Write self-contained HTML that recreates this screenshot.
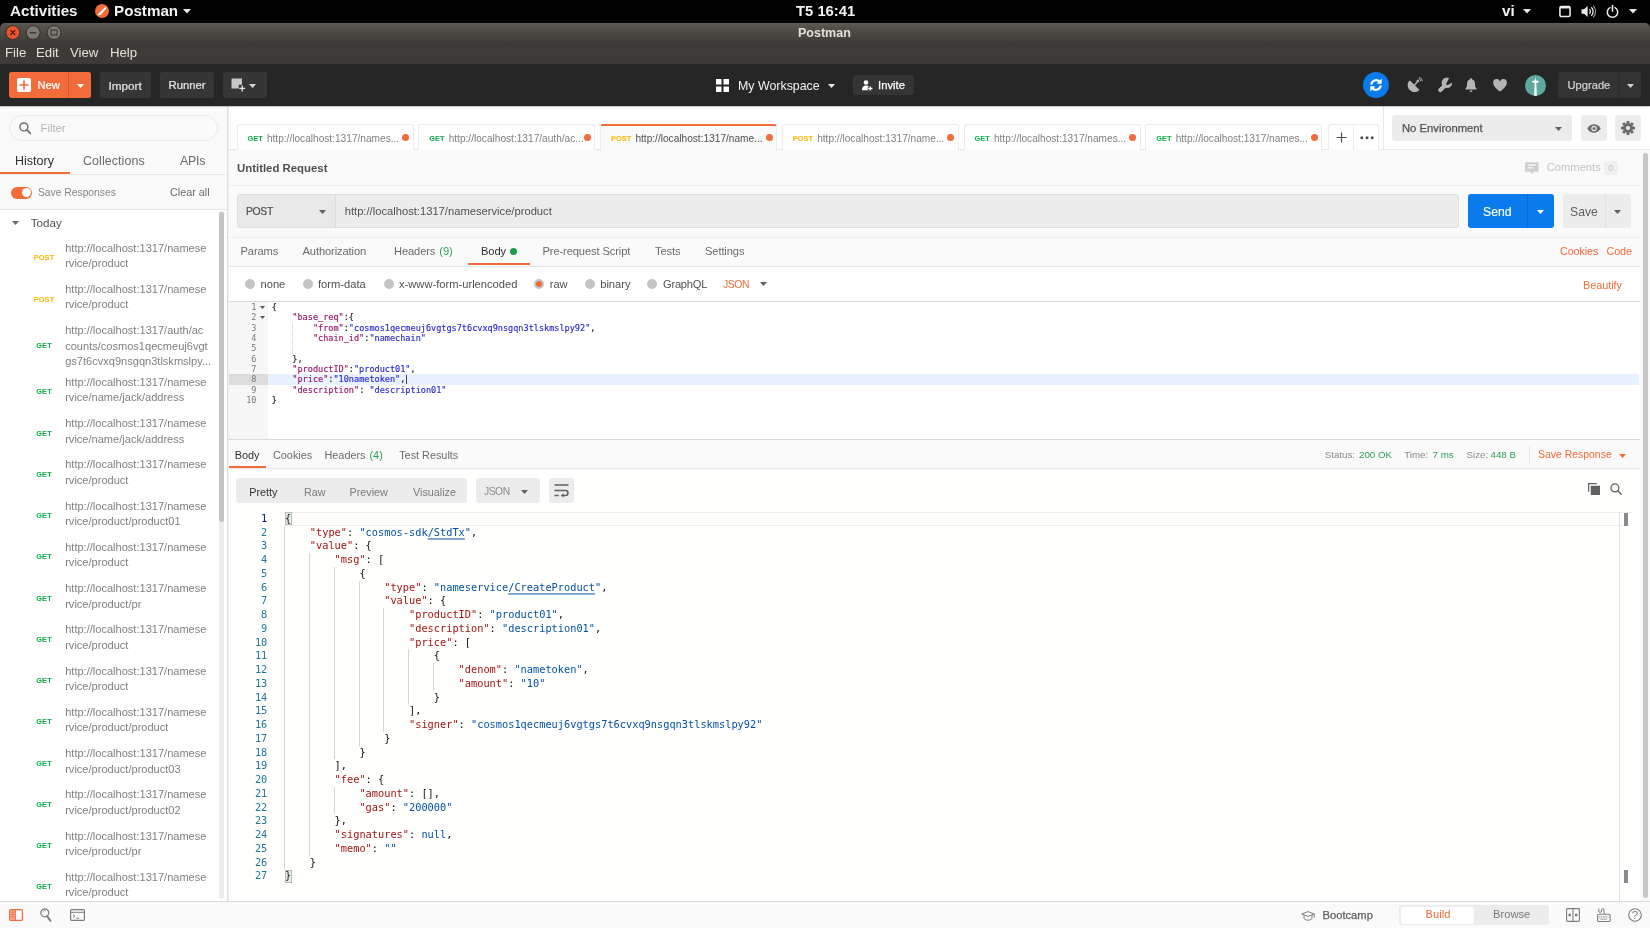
<!DOCTYPE html>
<html lang="en">
<head>
<meta charset="utf-8">
<title>Postman</title>
<style>
*{box-sizing:border-box;margin:0;padding:0}
html,body{width:1650px;height:928px;overflow:hidden;background:#fff}
body{position:relative;font-family:"Liberation Sans",sans-serif;font-size:11.17px;color:#505050;-webkit-font-smoothing:antialiased}
.a{position:absolute;white-space:nowrap}
.t{position:absolute;white-space:nowrap;line-height:1;transform:translateY(-50%)}
svg{position:absolute;overflow:visible}
/* ---------- GNOME top bar ---------- */
#topbar{left:0;top:0;width:1650px;height:23px;background:#000;color:#f2f2f2;font-weight:700;font-size:15.2px}
/* ---------- window title + menu ---------- */
#win{left:0;top:23px;width:1650px;height:41px;border-radius:5px 5px 0 0;background:linear-gradient(#625f55 0,#57554c 2px,#4a4942 10px,#403f3a 18px,#3c3b37 21px,#3c3b37 100%)}
#win .menu{font-size:13.2px;color:#e4e0d7}
#win .title{font-size:12.5px;font-weight:700;color:#e4e0d7}
/* ---------- Postman header ---------- */
#hdr{left:0;top:64px;width:1650px;height:42px;background:#262626;color:#fff;z-index:5;box-shadow:0 .5px 1.500px rgba(0,0,0,.55)}
.hb{position:absolute;top:8px;height:26px;border-radius:2.5px;background:#363636}
/* ---------- sidebar ---------- */
#side{left:0;top:106px;width:229px;height:795px;background:#fafafa}
.hi{margin-top:.5px;position:absolute;left:65.200px;width:150px;line-height:15.400px;font-size:11.050px;color:#808080;white-space:nowrap}
.hi b{position:absolute;left:-41.200px;width:40px;text-align:center;top:17.500px;line-height:1;font-size:7.400px;transform:translateY(-50%);letter-spacing:.1px}
.hi b.p{color:#ffb400}.hi b.g{color:#0cab4b}
/* ---------- main ---------- */
#main{left:229px;top:106px;width:1421px;height:795px;background:#fafafa}
.tab{position:absolute;top:18px;width:177px;height:26px;border:1px solid #ececec;border-bottom:0;border-radius:3px 3px 0 0;background:#fff;font-size:10.150px;color:#808080}
.tab.act{background:#fafafa;border-top:2px solid #f26b3a;color:#505050;height:27px}
.tab b,.tab span{position:absolute;top:14px;line-height:1;transform:translateY(-50%);white-space:nowrap}
.tab.act b,.tab.act span{top:13px}
.tab b{left:9.800px;font-size:7.400px;letter-spacing:.1px}
.tab b.p{color:#ffb400}.tab b.g{color:#0cab4b}
.tab i{position:absolute;left:164.500px;top:9.200px;width:7px;height:7px;border-radius:50%;background:#f26b3a}
.tab.act i{top:8.200px}
.rt{top:145.500px;font-size:11.170px;color:#6b6b6b;letter-spacing:-.12px}
.bt{top:178.500px;font-size:11.170px;color:#505050}
.rd{position:absolute;top:172.700px;width:10px;height:10px;border-radius:50%;background:#c4c4c4}
.rd.on{background:radial-gradient(circle,#f26b3a 0,#f26b3a 2.600px,#c4c4c4 3.400px)}
.al{position:absolute;left:0;width:1400px;height:10.310px;line-height:10.310px;font-family:"DejaVu Sans Mono","Liberation Mono",monospace;font-size:8.540px;color:#222;white-space:pre;-webkit-text-stroke:.15px}
.al .n{position:absolute;left:0;width:27.500px;text-align:right;color:#7a7a7a;-webkit-text-stroke:0}
.al .c{position:absolute;left:42.800px}
.al .k{color:#96186c}.al .s{color:#2a2ad4}
.ml{transform:translateY(.45px);position:absolute;left:0;width:1390px;height:13.750px;line-height:13.750px;font-family:"DejaVu Sans Mono","Liberation Mono",monospace;font-size:10.310px;color:#111;white-space:pre}
.ml .n{position:absolute;left:0;width:38.300px;text-align:right;color:#237893}
.ml .n.on{color:#0b216f}
.ml .c{position:absolute;left:56px}
.ml .k{color:#a31515}.ml .s{color:#0451a5}
.ml u{text-decoration:underline;text-underline-offset:1.500px}
.rs{top:349px;font-size:10.850px;color:#6b6b6b}
.st{top:348.800px;font-size:9.750px;color:#8a8a8a}
.st.v{color:#2e9f54}
.vw{top:386px;font-size:10.800px;color:#7a7a7a}
/* ---------- status bar ---------- */
#sbar{left:0;top:901px;width:1650px;height:27px;background:#fafafa;border-top:1px solid #dbdbdb}
</style>
</head>
<body>
<div id="root" style="position:absolute;left:0;top:0;width:1650px;height:928px;will-change:transform;opacity:.999">

<!-- ================= GNOME TOP BAR ================= -->
<div id="topbar" class="a">
  <span class="t" style="left:10px;top:11px">Activities</span>
  <svg style="left:95px;top:4px" width="14" height="14" viewBox="0 0 14 14"><circle cx="7" cy="7" r="7" fill="#f26b3a"/><path d="M3.2 10.8 L10.6 3.4 M3.2 10.8 L5.4 10.2 L10.9 4.2" stroke="#fff" stroke-width="1.1" fill="none" stroke-linecap="round"/></svg>
  <span class="t" style="left:114px;top:11px">Postman</span>
  <svg style="left:183px;top:9px" width="8" height="5" viewBox="0 0 8 5"><path d="M0 0h8L4 4.6z" fill="#e8e8e8"/></svg>
  <span class="t" style="left:796px;top:11px;font-size:14.8px">T5 16:41</span>
  <span class="t" style="left:1502px;top:11px">vi</span>
  <svg style="left:1523px;top:9px" width="8" height="5" viewBox="0 0 8 5"><path d="M0 0h8L4 4.6z" fill="#e8e8e8"/></svg>
  <svg style="left:1559px;top:5px" width="12" height="12.500" viewBox="0 0 13 13" preserveAspectRatio="none"><rect x="1" y="1.6" width="11" height="10.4" rx="1.6" fill="none" stroke="#ececec" stroke-width="1.7"/><rect x="1" y="1" width="11" height="2.6" rx="1" fill="#ececec"/></svg>
  <svg style="left:1581px;top:5px" width="15" height="13" viewBox="0 0 15 13"><path d="M0.5 4.3h2.6L6.6 1v11L3.1 8.7H0.5z" fill="#ececec"/><path d="M8.4 4.2a3.2 3.2 0 0 1 0 4.6" stroke="#ececec" stroke-width="1.3" fill="none"/><path d="M10.3 2.2a6 6 0 0 1 0 8.6" stroke="#ececec" stroke-width="1.3" fill="none"/><path d="M12.2 0.6a8.6 8.6 0 0 1 0 11.8" stroke="#9a9a9a" stroke-width="1.1" fill="none"/></svg>
  <svg style="left:1606px;top:5px" width="13" height="13" viewBox="0 0 13 13"><path d="M4 2.6a5.2 5.2 0 1 0 5 0" stroke="#ececec" stroke-width="1.5" fill="none" stroke-linecap="round"/><path d="M6.5 0.6v5.6" stroke="#ececec" stroke-width="1.6" stroke-linecap="round"/></svg>
  <svg style="left:1629px;top:9px" width="8" height="5" viewBox="0 0 8 5"><path d="M0 0h8L4 4.6z" fill="#e8e8e8"/></svg>
</div>

<!-- ================= WINDOW TITLE + MENU ================= -->
<div class="a" style="left:0;top:23px;width:1650px;height:8px;background:#000"></div>
<div id="win" class="a">
  <svg style="left:4px;top:1px" width="60" height="18" viewBox="0 0 60 18">
    <circle cx="8.800" cy="8.500" r="6.900" fill="#e9562d" stroke="#2f2e2a" stroke-width="1"/>
    <path d="M6.400 6.100l4.800 4.800M11.200 6.100l-4.800 4.800" stroke="#4a1608" stroke-width="1.300"/>
    <circle cx="29.200" cy="8.500" r="6.900" fill="#7b7971" stroke="#2f2e2a" stroke-width="1"/>
    <path d="M25.8 8.7h6.4" stroke="#3c3b37" stroke-width="1.4"/>
    <circle cx="50" cy="8.500" r="6.900" fill="#7b7971" stroke="#2f2e2a" stroke-width="1"/>
    <rect x="47" y="6" width="6" height="5" fill="none" stroke="#3c3b37" stroke-width="1.2"/>
  </svg>
  <span class="t title" style="left:798px;top:9.5px">Postman</span>
  <span class="t menu" style="left:5px;top:30px">File</span>
  <span class="t menu" style="left:36px;top:30px">Edit</span>
  <span class="t menu" style="left:70px;top:30px">View</span>
  <span class="t menu" style="left:110px;top:30px">Help</span>
</div>

<!-- ================= POSTMAN HEADER ================= -->
<div id="hdr" class="a">
  <!-- New -->
  <div class="hb" style="left:9px;width:82px;background:#f26b3a"></div>
  <div class="a" style="left:68px;top:8px;width:1px;height:26px;background:#d9572a"></div>
  <svg style="left:17px;top:14px" width="14" height="14" viewBox="0 0 14 14"><rect width="14" height="14" rx="2" fill="#fff"/><path d="M7 2.6v8.8M2.6 7h8.8" stroke="#f26b3a" stroke-width="1.7"/></svg>
  <span class="t" style="left:37.5px;top:21.5px;color:#fff;-webkit-text-stroke:.2px #fff">New</span>
  <svg style="left:76.5px;top:19.5px" width="7" height="4" viewBox="0 0 7 4"><path d="M0 0h7L3.5 4z" fill="#fff"/></svg>
  <!-- Import / Runner -->
  <div class="hb" style="left:100px;width:51px"></div>
  <span class="t" style="left:108.5px;top:21.5px;color:#e6e6e6;font-size:11.700px;-webkit-text-stroke:.2px #e6e6e6">Import</span>
  <div class="hb" style="left:160px;width:54px"></div>
  <span class="t" style="left:168.5px;top:21.5px;color:#e6e6e6;font-size:11.300px;-webkit-text-stroke:.2px #e6e6e6">Runner</span>
  <div class="hb" style="left:223px;width:44px"></div>
  <svg style="left:231px;top:14px" width="15" height="14" viewBox="0 0 15 14"><path d="M0.5 0.5h10.5v6.3h-3.3v3.7h-7.2z" fill="#c9c9c9"/><path d="M11.2 7.4v6M8.2 10.4h6" stroke="#e6e6e6" stroke-width="1.4"/></svg>
  <svg style="left:249px;top:19.5px" width="7" height="4" viewBox="0 0 7 4"><path d="M0 0h7L3.5 4z" fill="#d8d8d8"/></svg>
  <!-- workspace -->
  <svg style="left:716px;top:15px" width="13" height="13" viewBox="0 0 13 13"><path d="M0 0h5.5v5.5H0zM7.5 0H13v5.5H7.5zM0 7.5h5.5V13H0zM7.5 7.5H13V13H7.5z" fill="#fff"/></svg>
  <span class="t" style="left:738px;top:21.5px;color:#f0f0f0;font-size:12.4px">My Workspace</span>
  <svg style="left:827.5px;top:19.5px" width="7" height="4" viewBox="0 0 7 4"><path d="M0 0h7L3.5 4z" fill="#e8e8e8"/></svg>
  <div class="hb" style="left:853px;width:61px;top:11px;height:20px;background:#353535"></div>
  <svg style="left:862px;top:15.500px" width="11" height="11" viewBox="0 0 11 11"><circle cx="4" cy="2.500" r="2.300" fill="#fff"/><path d="M0 10.300c0-3.200 1.700-4.700 4-4.700 1.300 0 2.300.5 3 1.300v3.400z" fill="#fff"/><path d="M8.300 5.800v5.200M5.700 8.400h5.200" stroke="#353535" stroke-width="3"/><path d="M8.300 6.400v4.200M6.200 8.500h4.200" stroke="#fff" stroke-width="1.300"/></svg>
  <span class="t" style="left:878px;top:21.500px;color:#fff;font-size:11.300px;-webkit-text-stroke:.25px #fff">Invite</span>
  <!-- right icons -->
  <svg style="left:1362.700px;top:8px" width="26" height="26" viewBox="0 0 26 26"><circle cx="13" cy="13" r="13" fill="#097bed"/><path d="M8.300 12.600a4.800 4.800 0 0 1 8.300-2.900" stroke="#fff" stroke-width="2.100" fill="none"/><path d="M18.700 6.600v5.100h-5.100z" fill="#fff"/><path d="M17.700 13.400a4.800 4.800 0 0 1-8.300 2.900" stroke="#fff" stroke-width="2.100" fill="none"/><path d="M7.300 19.400v-5.100h5.100z" fill="#fff"/></svg>
  <svg style="left:1407px;top:13.200px" width="16" height="15" viewBox="0 0 16 15"><path d="M2.700 3.200a7 7 0 0 0 9.900 9.900z" fill="#b4b4b4"/><path d="M7.400 8.400l3.300-4.200" stroke="#b4b4b4" stroke-width="1.400"/><circle cx="10.900" cy="4" r="1.300" fill="#b4b4b4"/><path d="M11.500 1.700a3 3 0 0 1 2.300 2.600M12 .2a4.800 4.800 0 0 1 3.400 3.900" stroke="#b4b4b4" stroke-width=".9" fill="none"/><path d="M5.500 12.700l-.8 1.900h5l-.7-1.300z" fill="#b4b4b4"/></svg>
  <svg style="left:1437.500px;top:13px" width="15" height="15" viewBox="0 0 15 15"><path d="M5.800 7.200L1 12a1.700 1.700 0 0 0 2.400 2.400l4.800-4.800z" fill="#b4b4b4" stroke="#b4b4b4" stroke-width="1"/><circle cx="8.900" cy="5.800" r="5.300" fill="#b4b4b4"/><path d="M8.300 6.400l4.400-8.400 5.500 5.500-8.400 4.400a1.300 1.300 0 0 1-1.500-1.500z" fill="#262626"/></svg>
  <svg style="left:1464.800px;top:13.500px" width="12" height="15" viewBox="0 0 12 15"><path d="M6 .300c.6 0 1 .4 1 1 1.900.6 2.900 2.200 2.900 4.400 0 2.700.6 3.900 1.600 4.800v.900H.500v-.900c1-.9 1.600-2.100 1.600-4.800 0-2.200 1-3.800 2.900-4.400 0-.6.400-1 1-1zM4.500 12.500h3a1.500 1.500 0 0 1-3 0z" fill="#b4b4b4"/></svg>
  <svg style="left:1493px;top:15px" width="14" height="13" viewBox="0 0 14 13"><path d="M7 12.600C2.600 9 .2 6.600.2 3.900A3.500 3.500 0 0 1 7 2.400a3.500 3.500 0 0 1 6.800 1.500C13.800 6.600 11.400 9 7 12.600z" fill="#b4b4b4"/></svg>
  <svg style="left:1525px;top:10.500px" width="21" height="21" viewBox="0 0 21 21"><circle cx="10.500" cy="10.500" r="10.500" fill="#5fa8a0"/><path d="M10.500 1.200l.5 4.300c1.500.1 2.700.5 3.300 1-.7.800-1.800 1.300-3 1.500l.6 12.800h-2.800l.6-12.800c-1.200-.2-2.300-.7-3-1.500.6-.5 1.800-.9 3.300-1z" fill="#fff"/></svg>
  <div class="hb" style="left:1558px;width:83px;background:#333"></div>
  <div class="a" style="left:1618px;top:8px;width:1px;height:26px;background:#2a2a2a"></div>
  <span class="t" style="left:1567.500px;top:21.500px;color:#d6d6d6;-webkit-text-stroke:.2px #d6d6d6">Upgrade</span>
  <svg style="left:1627px;top:19.500px" width="7" height="4" viewBox="0 0 7 4"><path d="M0 0h7L3.500 4z" fill="#d0d0d0"/></svg>
</div>

<!-- ================= SIDEBAR ================= -->
<div id="side" class="a">
  <div class="a" style="left:9px;top:9px;width:209px;height:26px;border:1px solid #e9e9e9;border-radius:13px;background:#fafafa"></div>
  <svg style="left:19px;top:16px" width="12.300" height="12.300" viewBox="0 0 13 13"><circle cx="5.200" cy="5.200" r="4.200" fill="none" stroke="#6b6b6b" stroke-width="1.500"/><path d="M8.300 8.300l3.700 3.700" stroke="#6b6b6b" stroke-width="1.700" stroke-linecap="round"/></svg>
  <span class="t" style="left:40.500px;top:22.500px;color:#b4b4b4;font-size:11.300px">Filter</span>
  <span class="t" style="left:15px;top:54.500px;color:#303030;font-size:12.500px">History</span>
  <span class="t" style="left:83px;top:54.500px;font-size:12.500px;color:#6a6a6a;letter-spacing:.05px">Collections</span>
  <span class="t" style="left:180px;top:54.500px;font-size:12.500px;color:#6a6a6a;letter-spacing:-.3px">APIs</span>
  <div class="a" style="left:0;top:65.500px;width:69.500px;height:2.700px;background:#f26b3a"></div>
  <div class="a" style="left:0;top:68.200px;width:227px;height:1px;background:#ebebeb"></div>
  <div class="a" style="left:10.500px;top:80.500px;width:21.500px;height:12px;border-radius:6px;background:#f26b3a"></div>
  <div class="a" style="left:21.500px;top:82px;width:9px;height:9px;border-radius:50%;background:#fff"></div>
  <span class="t" style="left:38px;top:86.800px;color:#858585;font-size:10.300px">Save Responses</span>
  <span class="t" style="left:170px;top:86.300px;color:#6a6a6a;font-size:10.800px">Clear all</span>
  <div class="a" style="left:0;top:103px;width:227px;height:1px;background:#e6e6e6"></div>
  <div class="a" style="left:0;top:104px;width:227px;height:691px;background:#fff;overflow:hidden">
  </div>
  <svg style="left:12px;top:115.300px" width="7" height="4" viewBox="0 0 7 4"><path d="M0 0h7L3.500 4z" fill="#6b6b6b"/></svg>
  <span class="t" style="left:30.800px;top:117px;color:#505050;font-size:11.600px">Today</span>
  <div class="hi" style="top:134.30px"><b class="p">POST</b>http://localhost:1317/namese<br>rvice/product</div>
  <div class="hi" style="top:175.55px"><b class="p">POST</b>http://localhost:1317/namese<br>rvice/product</div>
  <div class="hi" style="top:216.80px"><b class="g" style="top:23.2px">GET</b>http://localhost:1317/auth/ac<br>counts/cosmos1qecmeuj6vgt<br>gs7t6cvxq9nsgqn3tlskmslpy...</div>
  <div class="hi" style="top:268.36px"><b class="g">GET</b>http://localhost:1317/namese<br>rvice/name/jack/address</div>
  <div class="hi" style="top:309.61px"><b class="g">GET</b>http://localhost:1317/namese<br>rvice/name/jack/address</div>
  <div class="hi" style="top:350.86px"><b class="g">GET</b>http://localhost:1317/namese<br>rvice/product</div>
  <div class="hi" style="top:392.11px"><b class="g">GET</b>http://localhost:1317/namese<br>rvice/product/product01</div>
  <div class="hi" style="top:433.36px"><b class="g">GET</b>http://localhost:1317/namese<br>rvice/product</div>
  <div class="hi" style="top:474.61px"><b class="g">GET</b>http://localhost:1317/namese<br>rvice/product/pr</div>
  <div class="hi" style="top:515.86px"><b class="g">GET</b>http://localhost:1317/namese<br>rvice/product</div>
  <div class="hi" style="top:557.11px"><b class="g">GET</b>http://localhost:1317/namese<br>rvice/product</div>
  <div class="hi" style="top:598.36px"><b class="g">GET</b>http://localhost:1317/namese<br>rvice/product/product</div>
  <div class="hi" style="top:639.61px"><b class="g">GET</b>http://localhost:1317/namese<br>rvice/product/product03</div>
  <div class="hi" style="top:680.86px"><b class="g">GET</b>http://localhost:1317/namese<br>rvice/product/product02</div>
  <div class="hi" style="top:722.11px"><b class="g">GET</b>http://localhost:1317/namese<br>rvice/product/pr</div>
  <div class="hi" style="top:763.36px"><b class="g">GET</b>http://localhost:1317/namese<br>rvice/product</div>
  <div class="a" style="left:219.300px;top:105px;width:4.600px;height:688px;border-radius:2px;background:#ececec"></div>
  <div class="a" style="left:219.300px;top:106px;width:4.600px;height:310px;border-radius:2.200px;background:#c4c4c4"></div>
</div>

<div class="a" style="left:226.800px;top:106px;width:2.700px;height:795px;z-index:3;background:linear-gradient(to right,#d9d9d9,#e6e6e6 45%,#f6f6f6)"></div>
<!-- ================= MAIN ================= -->
<div id="main" class="a">
  <!-- tab strip -->
  <div class="a" style="left:0;top:0;width:1421px;height:44px;background:#fff"></div>
  <div class="a" style="left:0;top:43.200px;width:1421px;height:1px;background:#e8e8e8"></div>
  <div class="tab" style="left:7.60px"><b class="g">GET</b><span style="left:29.3px">http://localhost:1317/names...</span><i></i></div>
  <div class="tab" style="left:189.35px"><b class="g">GET</b><span style="left:29.3px">http://localhost:1317/auth/ac...</span><i></i></div>
  <div class="tab act" style="left:371.10px"><b class="p">POST</b><span style="left:34.3px">http://localhost:1317/name...</span><i></i></div>
  <div class="tab" style="left:552.85px"><b class="p">POST</b><span style="left:34.3px">http://localhost:1317/name...</span><i></i></div>
  <div class="tab" style="left:734.60px"><b class="g">GET</b><span style="left:29.3px">http://localhost:1317/names...</span><i></i></div>
  <div class="tab" style="left:916.35px"><b class="g">GET</b><span style="left:29.3px">http://localhost:1317/names...</span><i></i></div>
  <div class="a" style="left:1098.500px;top:18px;width:51.300px;height:26px;border:1px solid #ececec;border-bottom:0;border-radius:3px 3px 0 0;background:#fff"></div>
  <div class="a" style="left:1124px;top:18px;width:1px;height:26px;background:#ececec"></div>
  <svg style="left:1106.500px;top:26px" width="11" height="11" viewBox="0 0 11 11"><path d="M5.500 0.500v10M0.500 5.500h10" stroke="#505050" stroke-width="1.200"/></svg>
  <svg style="left:1130.500px;top:30px" width="14" height="4" viewBox="0 0 14 4"><circle cx="1.800" cy="1.800" r="1.500" fill="#505050"/><circle cx="7" cy="1.800" r="1.500" fill="#505050"/><circle cx="12.200" cy="1.800" r="1.500" fill="#505050"/></svg>
  <div class="a" style="left:1153.500px;top:0;width:1px;height:44px;background:#e8e8e8"></div>
  <!-- environment -->
  <div class="a" style="left:1162.500px;top:9px;width:180.500px;height:26px;border-radius:3px;background:#ececec"></div>
  <span class="t" style="left:1173px;top:23.300px;color:#505050;font-size:11.250px;-webkit-text-stroke:.25px #505050">No Environment</span>
  <svg style="left:1325.500px;top:20.500px" width="7" height="4" viewBox="0 0 7 4"><path d="M0 0h7L3.500 4z" fill="#606060"/></svg>
  <div class="a" style="left:1351.700px;top:9px;width:26px;height:26px;border-radius:3px;background:#ececec"></div>
  <svg style="left:1357.500px;top:17.500px" width="14" height="9" viewBox="0 0 14 9"><path d="M0.300 4.500C2 1.500 4.400.300 7 .300s5 1.200 6.700 4.200C12 7.500 9.600 8.700 7 8.700S2 7.500.300 4.500z" fill="#6b6b6b"/><circle cx="7" cy="4.500" r="2.700" fill="#ececec"/><circle cx="7" cy="4.500" r="1.500" fill="#6b6b6b"/></svg>
  <div class="a" style="left:1386.200px;top:9px;width:26px;height:26px;border-radius:3px;background:#ececec"></div>
  <svg style="left:1392.200px;top:15px" width="14" height="14" viewBox="-7 -7 14 14"><g fill="#6b6b6b"><circle r="4.700"/><rect x="-1.500" y="-7" width="3" height="14" rx=".6"/><rect x="-1.500" y="-7" width="3" height="14" rx=".6" transform="rotate(45)"/><rect x="-1.500" y="-7" width="3" height="14" rx=".6" transform="rotate(90)"/><rect x="-1.500" y="-7" width="3" height="14" rx=".6" transform="rotate(135)"/></g><circle r="2.100" fill="#ececec"/></svg>
  <!-- title row -->
  <span class="t" style="left:8px;top:62.700px;color:#505050;font-weight:700;font-size:11.400px">Untitled Request</span>
  <svg style="left:1296px;top:55.500px" width="13.500" height="13" viewBox="0 0 15 14"><path d="M0 0h15v10.500H9.500L7.500 13 5.500 10.500H0z" fill="#cfcfcf"/><path d="M3 3.300h9M3 6.300h6" stroke="#fafafa" stroke-width="1.300"/></svg>
  <span class="t" style="left:1317.700px;top:61.500px;color:#c3c3c3;font-size:11.200px">Comments</span>
  <div class="a" style="left:1375px;top:55px;width:13.500px;height:13.500px;border-radius:2px;background:#f0f0f0"></div>
  <span class="t" style="left:1379.300px;top:62px;color:#c3c3c3;font-size:9px">0</span>
  <div class="a" style="left:0;top:79px;width:1411px;height:1px;background:#ececec"></div>
  <!-- url row -->
  <div class="a" style="left:7.500px;top:88px;width:1222.500px;height:34.200px;border:1px solid #dedede;border-radius:3px;background:#ececec"></div>
  <div class="a" style="left:106px;top:89px;width:1px;height:32.200px;background:#dadada"></div>
  <div class="a" style="left:8.500px;top:89px;width:97.500px;height:32.200px;background:#e9e9e9;border-radius:2px 0 0 2px"></div>
  <span class="t" style="left:17px;top:106px;color:#505050;font-size:10.400px;letter-spacing:-.35px;-webkit-text-stroke:.2px #505050">POST</span>
  <svg style="left:89.500px;top:104px" width="7" height="4" viewBox="0 0 7 4"><path d="M0 0h7L3.500 4z" fill="#606060"/></svg>
  <span class="t" style="left:115.700px;top:105.700px;color:#505050;font-size:11.200px">http://localhost:1317/nameservice/product</span>
  <div class="a" style="left:1239px;top:88px;width:86px;height:34.200px;border-radius:3px;background:#097bed"></div>
  <div class="a" style="left:1298px;top:88px;width:1px;height:34.200px;background:#0a6bcb"></div>
  <span class="t" style="left:1254px;top:106px;color:#fff;font-size:12.200px;-webkit-text-stroke:.15px #fff">Send</span>
  <svg style="left:1307.500px;top:104px" width="7" height="4" viewBox="0 0 7 4"><path d="M0 0h7L3.500 4z" fill="#fff"/></svg>
  <div class="a" style="left:1333.500px;top:88px;width:68.500px;height:34.200px;border-radius:3px;background:#ececec"></div>
  <div class="a" style="left:1376px;top:88px;width:1px;height:34.200px;background:#e0e0e0"></div>
  <span class="t" style="left:1341px;top:106px;color:#606060;font-size:12.200px">Save</span>
  <svg style="left:1385px;top:104px" width="7" height="4" viewBox="0 0 7 4"><path d="M0 0h7L3.500 4z" fill="#606060"/></svg>
  <!-- request tabs -->
  <div class="a" style="left:0;top:130.500px;width:1411px;height:1px;background:#efefef"></div>
  <span class="t rt" style="left:11.500px">Params</span>
  <span class="t rt" style="left:73.500px">Authorization</span>
  <span class="t rt" style="left:165px">Headers <span style="color:#2e9f54;margin-left:1px">(9)</span></span>
  <span class="t rt" style="left:252px;color:#303030">Body</span>
  <div class="a" style="left:280.500px;top:142px;width:7px;height:7px;border-radius:50%;background:#1a9b47"></div>
  <div class="a" style="left:238.500px;top:157px;width:62.300px;height:2.400px;background:#f26b3a"></div>
  <span class="t rt" style="left:313.500px">Pre-request Script</span>
  <span class="t rt" style="left:426px">Tests</span>
  <span class="t rt" style="left:476px">Settings</span>
  <span class="t rt" style="left:1331px;top:144.700px;color:#f26b3a;font-size:10.800px">Cookies</span>
  <span class="t rt" style="left:1377.500px;top:144.700px;color:#f26b3a;font-size:10.800px">Code</span>
  <div class="a" style="left:0;top:159.700px;width:1411px;height:1px;background:#e6e6e6"></div>
  <!-- body type row -->
  <div class="a" style="left:0;top:160.700px;width:1411px;height:35px;background:#fff"></div>
  <i class="rd" style="left:16px"></i><span class="t bt" style="left:31.500px">none</span>
  <i class="rd" style="left:73.700px"></i><span class="t bt" style="left:89px">form-data</span>
  <i class="rd" style="left:154.500px"></i><span class="t bt" style="left:170px">x-www-form-urlencoded</span>
  <i class="rd on" style="left:305.200px"></i><span class="t bt" style="left:320.700px">raw</span>
  <i class="rd" style="left:355.700px"></i><span class="t bt" style="left:371.200px">binary</span>
  <i class="rd" style="left:418.200px"></i><span class="t bt" style="left:434px;letter-spacing:-.25px">GraphQL</span>
  <span class="t bt" style="left:494px;color:#f26b3a;font-size:10.400px;letter-spacing:-.4px">JSON</span>
  <svg style="left:530.500px;top:176px" width="7" height="4" viewBox="0 0 7 4"><path d="M0 0h7L3.500 4z" fill="#606060"/></svg>
  <span class="t bt" style="left:1354px;color:#f26b3a;font-size:10.800px">Beautify</span>
  <!-- request editor -->
  <div class="a" style="left:-1px;top:195.400px;width:1412.500px;height:138.600px;border:1px solid #dadada;background:#fff;overflow:hidden">
    <div class="a" style="left:0;top:0;width:38.500px;height:137px;background:#f7f7f7"></div>
    <div class="al" style="top:-0.35px"><span class="n">1</span><svg style="left:30.700px;top:3.600px" width="5" height="3" viewBox="0 0 5 3"><path d="M0 0h5L2.500 3z" fill="#555"/></svg><span class="c">{</span></div>
    <div class="al" style="top:9.96px"><span class="n">2</span><svg style="left:30.700px;top:3.600px" width="5" height="3" viewBox="0 0 5 3"><path d="M0 0h5L2.500 3z" fill="#555"/></svg><span class="c">    <span class="k">"base_req"</span>:{</span></div>
    <div class="al" style="top:20.27px"><span class="n">3</span><span class="c">        <span class="k">"from"</span>:<span class="s">"cosmos1qecmeuj6vgtgs7t6cvxq9nsgqn3tlskmslpy92"</span>,</span></div>
    <div class="al" style="top:30.58px"><span class="n">4</span><span class="c">        <span class="k">"chain_id"</span>:<span class="s">"namechain"</span></span></div>
    <div class="al" style="top:40.89px"><span class="n">5</span><span class="c"></span></div>
    <div class="al" style="top:51.20px"><span class="n">6</span><span class="c">    },</span></div>
    <div class="al" style="top:61.51px"><span class="n">7</span><span class="c">    <span class="k">"productID"</span>:<span class="s">"product01"</span>,</span></div>
    <div class="a" style="left:0;top:71.82px;width:38.500px;height:10.31px;background:#dcdcdc"></div><div class="a" style="left:38.500px;top:71.82px;width:1371px;height:10.31px;background:#e8f2fe"></div>
    <div class="al" style="top:71.82px"><span class="n">8</span><span class="c">    <span class="k">"price"</span>:<span class="s">"10nametoken"</span>,</span></div>
    <div class="al" style="top:82.13px"><span class="n">9</span><span class="c">    <span class="k">"description"</span>: <span class="s">"description01"</span></span></div>
    <div class="al" style="top:92.44px"><span class="n">10</span><span class="c">}</span></div>
    <div class="a" style="left:177px;top:72.32px;width:1px;height:9.300px;background:#444"></div>
    <div class="a" style="left:62.500px;top:20.27px;width:0;height:30.93px;border-left:1px dotted #cfcfcf"></div>
  </div>
  <!-- response -->
  <div class="a" style="left:0;top:334px;width:1411px;height:29px;background:#fafafa"></div>
  <span class="t rs" style="left:5.700px;color:#303030">Body</span>
  <span class="t rs" style="left:44px">Cookies</span>
  <span class="t rs" style="left:95.500px">Headers <span style="color:#2e9f54;margin-left:1px">(4)</span></span>
  <span class="t rs" style="left:170.200px">Test Results</span>
  <div class="a" style="left:-1px;top:359.700px;width:37.500px;height:2.500px;background:#f26b3a"></div>
  <span class="t st" style="left:1095.700px">Status:</span><span class="t st v" style="left:1130px">200 OK</span>
  <span class="t st" style="left:1175.200px">Time:</span><span class="t st v" style="left:1203.500px">7 ms</span>
  <span class="t st" style="left:1237.500px">Size:</span><span class="t st v" style="left:1261.500px">448 B</span>
  <div class="a" style="left:1299.500px;top:340px;width:1px;height:16.500px;background:#e6e6e6"></div>
  <span class="t" style="left:1309px;top:349px;color:#f26b3a;font-size:10.450px">Save Response</span>
  <svg style="left:1390px;top:347.800px" width="7" height="4" viewBox="0 0 7 4"><path d="M0 0h7L3.500 4z" fill="#f26b3a"/></svg>
  <div class="a" style="left:0;top:362.200px;width:1411px;height:1px;background:#e8e8e8"></div>
  <div class="a" style="left:0;top:363.500px;width:1411px;height:431.500px;background:#fffffe"></div>
  <!-- view bar -->
  <div class="a" style="left:7.200px;top:372.200px;width:231.300px;height:25px;border-radius:3px;background:#ececec"></div>
  <span class="t vw" style="left:20.200px;color:#303030">Pretty</span>
  <span class="t vw" style="left:75px">Raw</span>
  <span class="t vw" style="left:120.500px">Preview</span>
  <span class="t vw" style="left:184px">Visualize</span>
  <div class="a" style="left:247.200px;top:372.200px;width:63.800px;height:25px;border-radius:3px;background:#ececec"></div>
  <span class="t vw" style="left:255px;color:#8a8a8a;font-size:10.300px;letter-spacing:-.45px">JSON</span>
  <svg style="left:291.700px;top:383.500px" width="7" height="4" viewBox="0 0 7 4"><path d="M0 0h7L3.500 4z" fill="#606060"/></svg>
  <div class="a" style="left:319.700px;top:372.200px;width:25.500px;height:25px;border-radius:3px;background:#ececec"></div>
  <svg style="left:325px;top:377.600px" width="15" height="14" viewBox="0 0 15 14"><path d="M.5 1h14M.5 6.500h11a2.450 2.450 0 0 1 0 4.900h-3.300M.5 11.400h4.200" stroke="#606060" stroke-width="1.500" fill="none"/><path d="M9.600 9.200v4.400l-2.900-2.200z" fill="#606060"/></svg>
  <svg style="left:1358.500px;top:377px" width="12" height="12" viewBox="0 0 13 13"><path d="M.7 9.500V.700h8.800" stroke="#606060" stroke-width="1.300" fill="none"/><rect x="3" y="3" width="10" height="10" fill="#606060"/></svg>
  <svg style="left:1381px;top:377px" width="12" height="12" viewBox="0 0 13 13"><circle cx="5.300" cy="5.300" r="4.300" fill="none" stroke="#606060" stroke-width="1.400"/><path d="M8.500 8.500l3.700 3.700" stroke="#606060" stroke-width="1.600" stroke-linecap="round"/></svg>
  <!-- monaco -->
  <div class="a" style="left:56px;top:405.57px;width:1346px;height:14.15px;border-top:1.700px solid #eee;border-bottom:1.700px solid #eee"></div>
  <div class="a" style="left:55.20px;top:419.62px;width:1px;height:343.75px;background:#d6d6d6"></div>
  <div class="a" style="left:80.02px;top:447.12px;width:1px;height:302.50px;background:#d6d6d6"></div>
  <div class="a" style="left:104.84px;top:460.88px;width:1px;height:192.50px;background:#d6d6d6"></div>
  <div class="a" style="left:104.84px;top:680.88px;width:1px;height:27.50px;background:#d6d6d6"></div>
  <div class="a" style="left:129.66px;top:474.62px;width:1px;height:165.00px;background:#d6d6d6"></div>
  <div class="a" style="left:154.48px;top:502.12px;width:1px;height:123.75px;background:#d6d6d6"></div>
  <div class="a" style="left:179.30px;top:543.38px;width:1px;height:55.00px;background:#d6d6d6"></div>
  <div class="a" style="left:204.12px;top:557.12px;width:1px;height:27.50px;background:#d6d6d6"></div>
  <div class="ml" style="top:405.88px"><span class="n on">1</span><span class="c">{</span></div>
  <div class="ml" style="top:419.62px"><span class="n">2</span><span class="c">    <span class="k">"type"</span>: <span class="s">"cosmos-sdk<u>/StdTx</u>"</span>,</span></div>
  <div class="ml" style="top:433.38px"><span class="n">3</span><span class="c">    <span class="k">"value"</span>: {</span></div>
  <div class="ml" style="top:447.12px"><span class="n">4</span><span class="c">        <span class="k">"msg"</span>: [</span></div>
  <div class="ml" style="top:460.88px"><span class="n">5</span><span class="c">            {</span></div>
  <div class="ml" style="top:474.62px"><span class="n">6</span><span class="c">                <span class="k">"type"</span>: <span class="s">"nameservice<u>/CreateProduct</u>"</span>,</span></div>
  <div class="ml" style="top:488.38px"><span class="n">7</span><span class="c">                <span class="k">"value"</span>: {</span></div>
  <div class="ml" style="top:502.12px"><span class="n">8</span><span class="c">                    <span class="k">"productID"</span>: <span class="s">"product01"</span>,</span></div>
  <div class="ml" style="top:515.88px"><span class="n">9</span><span class="c">                    <span class="k">"description"</span>: <span class="s">"description01"</span>,</span></div>
  <div class="ml" style="top:529.62px"><span class="n">10</span><span class="c">                    <span class="k">"price"</span>: [</span></div>
  <div class="ml" style="top:543.38px"><span class="n">11</span><span class="c">                        {</span></div>
  <div class="ml" style="top:557.12px"><span class="n">12</span><span class="c">                            <span class="k">"denom"</span>: <span class="s">"nametoken"</span>,</span></div>
  <div class="ml" style="top:570.88px"><span class="n">13</span><span class="c">                            <span class="k">"amount"</span>: <span class="s">"10"</span></span></div>
  <div class="ml" style="top:584.62px"><span class="n">14</span><span class="c">                        }</span></div>
  <div class="ml" style="top:598.38px"><span class="n">15</span><span class="c">                    ],</span></div>
  <div class="ml" style="top:612.12px"><span class="n">16</span><span class="c">                    <span class="k">"signer"</span>: <span class="s">"cosmos1qecmeuj6vgtgs7t6cvxq9nsgqn3tlskmslpy92"</span></span></div>
  <div class="ml" style="top:625.88px"><span class="n">17</span><span class="c">                }</span></div>
  <div class="ml" style="top:639.62px"><span class="n">18</span><span class="c">            }</span></div>
  <div class="ml" style="top:653.38px"><span class="n">19</span><span class="c">        ],</span></div>
  <div class="ml" style="top:667.12px"><span class="n">20</span><span class="c">        <span class="k">"fee"</span>: {</span></div>
  <div class="ml" style="top:680.88px"><span class="n">21</span><span class="c">            <span class="k">"amount"</span>: [],</span></div>
  <div class="ml" style="top:694.62px"><span class="n">22</span><span class="c">            <span class="k">"gas"</span>: <span class="s">"200000"</span></span></div>
  <div class="ml" style="top:708.38px"><span class="n">23</span><span class="c">        },</span></div>
  <div class="ml" style="top:722.12px"><span class="n">24</span><span class="c">        <span class="k">"signatures"</span>: <span class="s">null</span>,</span></div>
  <div class="ml" style="top:735.88px"><span class="n">25</span><span class="c">        <span class="k">"memo"</span>: <span class="s">""</span></span></div>
  <div class="ml" style="top:749.62px"><span class="n">26</span><span class="c">    }</span></div>
  <div class="ml" style="top:763.38px"><span class="n">27</span><span class="c">}</span></div>
  <div class="a" style="left:55.5px;top:406.38px;width:7.21px;height:12.75px;border:1px solid #b9b9b9;background:rgba(0,100,0,.1)"></div>
  <div class="a" style="left:55.5px;top:763.88px;width:7.21px;height:12.75px;border:1px solid #b9b9b9;background:rgba(0,100,0,.1)"></div>
  <div class="a" style="left:1389.700px;top:406px;width:1px;height:389px;background:#e2e2e2"></div>
  <div class="a" style="left:1394.700px;top:406.500px;width:4.300px;height:13.300px;background:#8a8a8a"></div>
  <div class="a" style="left:1394.700px;top:763.500px;width:4.300px;height:13.700px;background:#8a8a8a"></div>
  <!-- page scrollbar -->
  <div class="a" style="left:1411px;top:44.500px;width:10px;height:750.500px;background:#fafafa"></div>
  <div class="a" style="left:1413.800px;top:47px;width:4.800px;height:745px;border-radius:2.500px;background:#c6c6c6"></div>
</div>

<!-- ================= STATUS BAR ================= -->
<div id="sbar" class="a">
  <svg style="left:8.500px;top:6.7px" width="14" height="12" viewBox="0 0 14 12"><rect x=".6" y=".6" width="12.800" height="10.800" rx="1" fill="none" stroke="#f26b3a" stroke-width="1.200"/><rect x="1" y="1" width="5" height="10" fill="#f7a486"/><path d="M6.300 .6v10.800" stroke="#f26b3a" stroke-width="1.100"/><path d="M2 3.200h3M2 5.500h3M2 7.800h3" stroke="#f26b3a" stroke-width=".9"/></svg>
  <svg style="left:40px;top:5.7px" width="12" height="14" viewBox="0 0 12 14"><circle cx="4.800" cy="4.800" r="4" fill="none" stroke="#7d7d7d" stroke-width="1.200"/><path d="M3 3.600a2.200 2.200 0 0 1 2.600-1" stroke="#7d7d7d" stroke-width=".8" fill="none"/><path d="M7.300 8.300l3.200 4.500" stroke="#7d7d7d" stroke-width="2" stroke-linecap="round"/></svg>
  <svg style="left:70px;top:6.7px" width="15" height="12" viewBox="0 0 15 12"><rect x=".6" y=".6" width="13.800" height="10.800" rx="1" fill="none" stroke="#7d7d7d" stroke-width="1.200"/><path d="M.6 3.300h13.800" stroke="#7d7d7d" stroke-width="1"/><path d="M3 5.600l2 1.500-2 1.500M6.300 9.200h3" stroke="#7d7d7d" stroke-width=".9" fill="none"/></svg>
  <svg style="left:1300.500px;top:8.7px" width="14" height="10" viewBox="0 0 14 10"><path d="M.7 3L7 .6 13.300 3 7 5.400z" fill="none" stroke="#7d7d7d" stroke-width="1"/><path d="M3 4.200v3.300c1 1.200 2.500 1.700 4 1.700s3-.5 4-1.700V4.200" fill="none" stroke="#7d7d7d" stroke-width="1"/><path d="M13.300 3v3.800" stroke="#7d7d7d" stroke-width=".9"/></svg>
  <span class="t" style="left:1322.500px;top:13.7px;color:#606060;font-size:11.200px;-webkit-text-stroke:.25px #606060">Bootcamp</span>
  <div class="a" style="left:1399.300px;top:3.2px;width:149.500px;height:20px;border-radius:3px;background:#ececec"></div>
  <div class="a" style="left:1401px;top:4.7px;width:73.300px;height:17px;border-radius:2.500px;background:#fff"></div>
  <span class="t" style="left:1425.500px;top:13.2px;color:#f26b3a;font-size:11.200px">Build</span>
  <span class="t" style="left:1493px;top:13.2px;color:#7a7a7a;font-size:11.200px">Browse</span>
  <svg style="left:1566px;top:6.2px" width="14" height="14" viewBox="0 0 14 14"><rect x=".6" y=".6" width="12.800" height="12.800" rx=".8" fill="none" stroke="#7d7d7d" stroke-width="1.100"/><path d="M7 .6v12.800" stroke="#7d7d7d" stroke-width="1.100"/><rect x="2.500" y="5.700" width="2.500" height="2.500" fill="#7d7d7d"/><rect x="9" y="5.700" width="2.500" height="2.500" fill="#7d7d7d"/></svg>
  <svg style="left:1597px;top:5.900px" width="14" height="15" viewBox="0 0 14 15"><rect x=".6" y="6.300" width="12.500" height="7.200" rx="1" fill="none" stroke="#7d7d7d" stroke-width="1.100"/><path d="M1.800 .5v2.600a1.300 1.300 0 0 0 2.600 0v-1.200a1.300 1.300 0 0 1 2.600 0v4.300" fill="none" stroke="#7d7d7d" stroke-width="1"/><path d="M2.300 8.600h9M2.300 10h9M3.500 11.500h6.600" stroke="#7d7d7d" stroke-width=".8" stroke-dasharray="1 .7"/></svg>
  <svg style="left:1628px;top:6.2px" width="14" height="14" viewBox="0 0 14 14"><circle cx="7" cy="7" r="6.300" fill="none" stroke="#7d7d7d" stroke-width="1.100"/></svg>
  <span class="t" style="left:1631.700px;top:13.500px;color:#7d7d7d;font-size:11.500px">?</span>
</div>

</div>
</body>
</html>
